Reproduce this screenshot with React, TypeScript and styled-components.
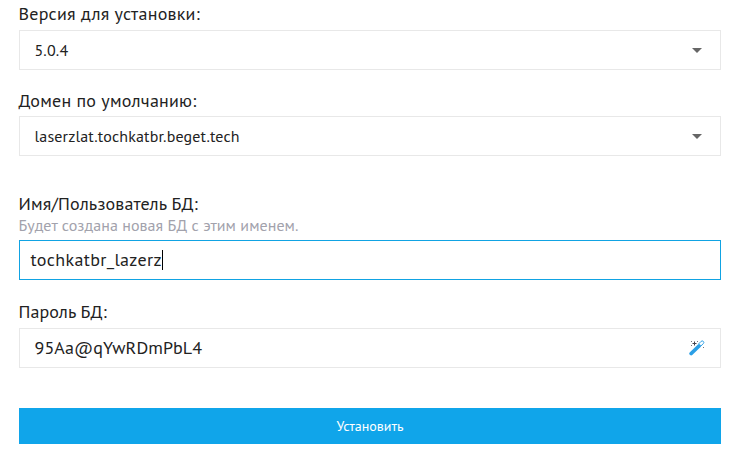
import React from 'react';
import styled, { createGlobalStyle } from 'styled-components';

const GlobalStyle = createGlobalStyle`
  * { box-sizing: border-box; }
  body {
    margin: 0;
    background: #fff;
    color: #222;
    font-family: 'PT Sans', 'Noto Sans', sans-serif;
    overflow: hidden;
  }
`;

const Form = styled.form`
  display: flex;
  flex-direction: column;
  width: 702px;
  height: 452px;
  margin-left: 19px;
  padding-top: 4px;
`;

const Field = styled.div<{ $gap: number }>`
  display: flex;
  flex-direction: column;
  margin-bottom: ${(p) => p.$gap}px;
`;

const Label = styled.label<{ $gap?: number; $spacing?: number }>`
  height: 20px;
  line-height: 20px;
  margin: 0 0 ${(p) => p.$gap ?? 6}px -0.5px;
  font-size: 18px;
  letter-spacing: ${(p) => p.$spacing ?? 0.24}px;
  white-space: nowrap;
`;

const Hint = styled.div`
  height: 20px;
  line-height: 20px;
  margin: 0 0 5px -0.5px;
  font-size: 16px;
  letter-spacing: 0.06px;
  color: #a2a2ac;
`;

const Control = styled.div<{ $focused?: boolean }>`
  display: flex;
  align-items: center;
  justify-content: space-between;
  height: 40px;
  padding: 0 15px 0 ${(p) => (p.$focused ? 10.5 : 14.5)}px;
  border: 1px solid ${(p) => (p.$focused ? '#11a3e3' : '#e8e8e8')};
  line-height: 20px;
`;

const SelectedOption = styled.span`
  font-size: 16px;
  letter-spacing: 0.15px;
`;

const InputValue = styled.span<{ $spacing: number }>`
  font-size: 18px;
  letter-spacing: ${(p) => p.$spacing}px;
`;

const EditedValue = styled.div`
  display: flex;
  align-items: center;
`;

const Caret = styled.span`
  width: 1px;
  height: 20px;
  background: #000;
`;

const Arrow = styled.span`
  margin-right: 3px;
  border: 5px solid transparent;
  border-top-color: #666;
  border-bottom: 0;
`;

const SubmitButton = styled.button`
  height: 36px;
  padding: 0;
  border: 0;
  background: #10a5ea;
  color: #fff;
  font-family: inherit;
  font-size: 14px;
  line-height: 36px;
`;

const Wand = () => (
  <svg width="16" height="16" viewBox="0 0 16 16" fill="none">
    <path d="M2.2 13.5 10 6" stroke="#2b9fe6" strokeWidth="3.8" strokeLinecap="round" />
    <path d="M9.4 4.1 12.1 1.4a1.5 1.5 0 0 1 2.2 2.2l-2.7 2.7" stroke="#2b9fe6" />
    <path d="M5.5 1.5v4M3.5 3.5h4" stroke="#45434d" />
    <path d="M2 1h1v1H2zM8 1h1v1H8zM2 5h1v1H2zM14 7h1v1h-1z" fill="#77757f" />
  </svg>
);

export default function App() {
  return (
    <>
      <GlobalStyle />
      <Form>
        <Field $gap={21}>
          <Label>Версия для установки:</Label>
          <Control>
            <SelectedOption>5.0.4</SelectedOption>
            <Arrow />
          </Control>
        </Field>
        <Field $gap={38}>
          <Label $gap={5}>Домен по умолчанию:</Label>
          <Control>
            <SelectedOption>laserzlat.tochkatbr.beget.tech</SelectedOption>
            <Arrow />
          </Control>
        </Field>
        <Field $gap={22}>
          <Label $gap={1} $spacing={0.16}>Имя/Пользователь БД:</Label>
          <Hint>Будет создана новая БД с этим именем.</Hint>
          <Control $focused>
            <EditedValue>
              <InputValue $spacing={0.36}>tochkatbr_lazerz</InputValue>
              <Caret />
            </EditedValue>
          </Control>
        </Field>
        <Field $gap={40}>
          <Label $spacing={0.06}>Пароль БД:</Label>
          <Control>
            <InputValue $spacing={0.08}>95Aa@qYwRDmPbL4</InputValue>
            <Wand />
          </Control>
        </Field>
        <SubmitButton type="button">Установить</SubmitButton>
      </Form>
    </>
  );
}
